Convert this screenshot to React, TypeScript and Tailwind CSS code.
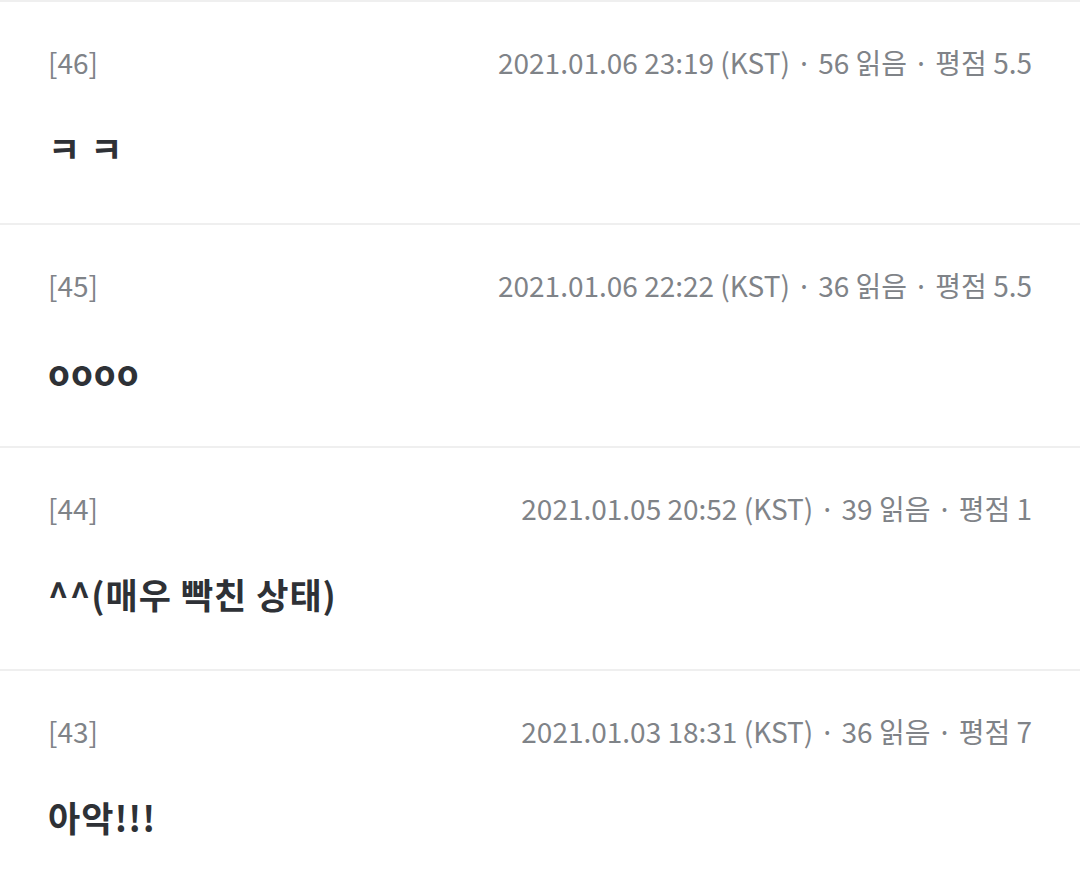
import React from "react";

type Reply = {
  no: number;
  date: string;
  views: number;
  score: string;
  body: string;
};

const replies: Reply[] = [
  { no: 46, date: "2021.01.06 23:19", views: 56, score: "5.5", body: "ㅋ ㅋ" },
  { no: 45, date: "2021.01.06 22:22", views: 36, score: "5.5", body: "oooo" },
  { no: 44, date: "2021.01.05 20:52", views: 39, score: "1", body: "^^(매우 빡친 상태)" },
  { no: 43, date: "2021.01.03 18:31", views: 36, score: "7", body: "아악!!!" },
];

const ReplyItem: React.FC<{ reply: Reply }> = ({ reply }) => {
  return (
    <div className="border-t-2 border-[#efefef] px-12 pt-[42px] pb-[55px]">
      <div className="flex items-center justify-between h-9 text-[28px] text-[#7f8388]">
        <span>[{reply.no}]</span>
        <span>
          {reply.date} (KST) · {reply.views} 읽음 · 평점 {reply.score}
        </span>
      </div>
      <div className="mt-12 h-10 flex items-center text-[35px] tracking-[1px] font-bold text-[#2e3136]">
        {reply.body}
      </div>
    </div>
  );
};

export default function App() {
  return (
    <div
      className="w-[1080px] min-h-[893px] bg-white overflow-hidden"
      style={{ fontFamily: '"Noto Sans CJK KR", "Noto Sans", sans-serif' }}
    >
      {replies.map((r) => (
        <ReplyItem key={r.no} reply={r} />
      ))}
    </div>
  );
}
